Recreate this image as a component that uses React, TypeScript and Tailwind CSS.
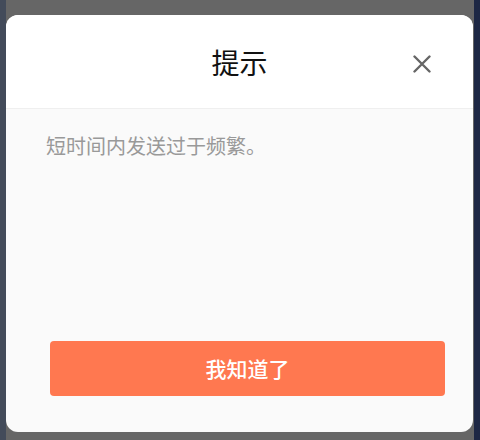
import React from "react";

export default function App() {
  const cjk = { fontFamily: '"Noto Sans CJK SC", "Noto Sans", sans-serif' };
  return (
    <div className="w-[480px] h-[440px] flex overflow-hidden" style={cjk}>
      <div className="w-[6px] h-full bg-[#434b5a]" />
      <div className="w-[468px] h-full bg-[#666666] pt-[15px]">
        <div className="w-[467px] h-[417px] bg-[#fafafa] rounded-[12px] overflow-hidden flex flex-col">
          <div className="h-[94px] bg-white border-b border-[#efefef] relative flex items-center justify-center">
            <span className="text-[28px] leading-none text-[#111]">提示</span>
            <svg
              className="absolute left-[407px] top-[40px]"
              width="18"
              height="18"
              viewBox="0 0 18 18"
            >
              <path d="M1.5 1.5 L16.5 16.5 M16.5 1.5 L1.5 16.5" stroke="#666" strokeWidth="2.4" strokeLinecap="round" />
            </svg>
          </div>
          <div className="flex-1 flex flex-col">
            <p className="pl-[40px] pt-[23px] text-[20px] leading-[28px] text-[#999999]">短时间内发送过于频繁。</p>
            <button className="mt-[181px] ml-[44px] w-[395px] h-[55px] rounded-[4px] bg-[#ff7850] text-white text-[21px] font-medium flex items-center justify-center">
              我知道了
            </button>
          </div>
        </div>
      </div>
      <div className="w-[6px] h-full bg-[#1d2744]" />
    </div>
  );
}
